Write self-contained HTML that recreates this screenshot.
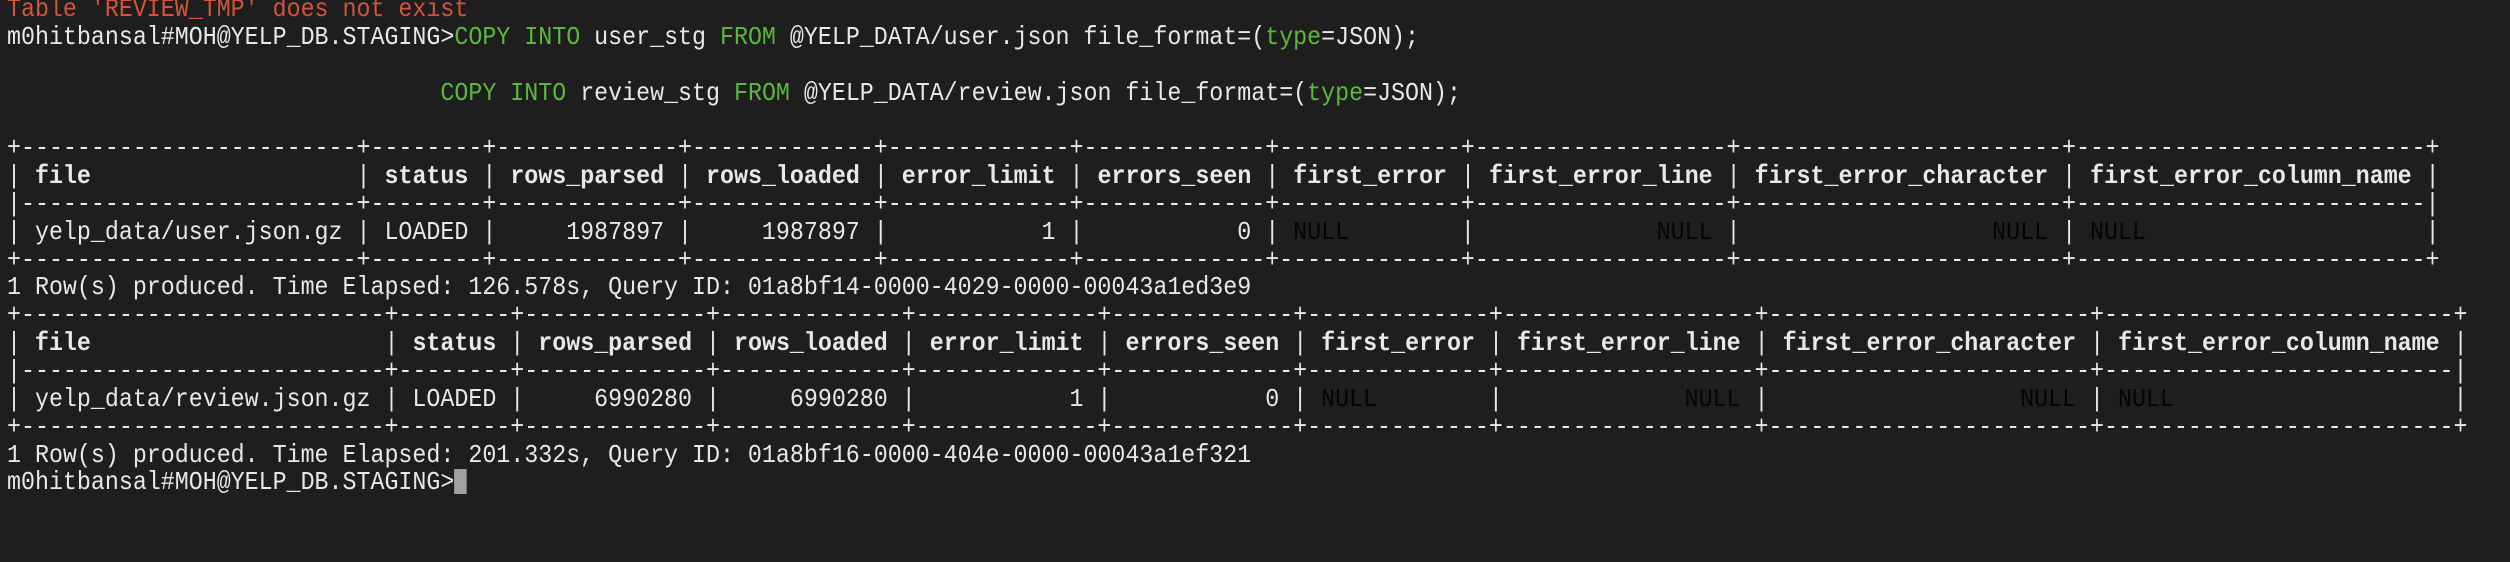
<!DOCTYPE html>
<html><head><meta charset="utf-8"><style>
html,body{margin:0;padding:0;background:#1e1e1e;width:2510px;height:562px;overflow:hidden}
pre{margin:0;position:absolute;left:7px;top:-4px;font-family:"Liberation Mono",monospace;font-size:26px;line-height:27.85px;color:#e8e8e8;white-space:pre;transform:scaleX(0.896);transform-origin:0 0}
.r{color:#d0553c}.g{color:#5cb83c}.n{color:#050505}b{font-weight:bold}
.cur{display:inline-block;width:14px;height:25px;background:#a0a0a0;vertical-align:-5px}
</style></head><body><pre><span class="r">Table 'REVIEW_TMP' does not exist</span>
m0hitbansal#MOH@YELP_DB.STAGING&gt;<span class="g">COPY INTO</span> user_stg <span class="g">FROM</span> @YELP_DATA/user.json file_format=(<span class="g">type</span>=JSON);

                               <span class="g">COPY INTO</span> review_stg <span class="g">FROM</span> @YELP_DATA/review.json file_format=(<span class="g">type</span>=JSON);

+------------------------+--------+-------------+-------------+-------------+-------------+-------------+------------------+-----------------------+-------------------------+
| <b>file</b>                   | <b>status</b> | <b>rows_parsed</b> | <b>rows_loaded</b> | <b>error_limit</b> | <b>errors_seen</b> | <b>first_error</b> | <b>first_error_line</b> | <b>first_error_character</b> | <b>first_error_column_name</b> |
|------------------------+--------+-------------+-------------+-------------+-------------+-------------+------------------+-----------------------+-------------------------|
| yelp_data/user.json.gz | LOADED |     1987897 |     1987897 |           1 |           0 | <span class="n">NULL</span>        |             <span class="n">NULL</span> |                  <span class="n">NULL</span> | <span class="n">NULL</span>                    |
+------------------------+--------+-------------+-------------+-------------+-------------+-------------+------------------+-----------------------+-------------------------+
1 Row(s) produced. Time Elapsed: 126.578s, Query ID: 01a8bf14-0000-4029-0000-00043a1ed3e9
+--------------------------+--------+-------------+-------------+-------------+-------------+-------------+------------------+-----------------------+-------------------------+
| <b>file</b>                     | <b>status</b> | <b>rows_parsed</b> | <b>rows_loaded</b> | <b>error_limit</b> | <b>errors_seen</b> | <b>first_error</b> | <b>first_error_line</b> | <b>first_error_character</b> | <b>first_error_column_name</b> |
|--------------------------+--------+-------------+-------------+-------------+-------------+-------------+------------------+-----------------------+-------------------------|
| yelp_data/review.json.gz | LOADED |     6990280 |     6990280 |           1 |           0 | <span class="n">NULL</span>        |             <span class="n">NULL</span> |                  <span class="n">NULL</span> | <span class="n">NULL</span>                    |
+--------------------------+--------+-------------+-------------+-------------+-------------+-------------+------------------+-----------------------+-------------------------+
1 Row(s) produced. Time Elapsed: 201.332s, Query ID: 01a8bf16-0000-404e-0000-00043a1ef321
m0hitbansal#MOH@YELP_DB.STAGING&gt;<span class="cur"></span></pre></body></html>
